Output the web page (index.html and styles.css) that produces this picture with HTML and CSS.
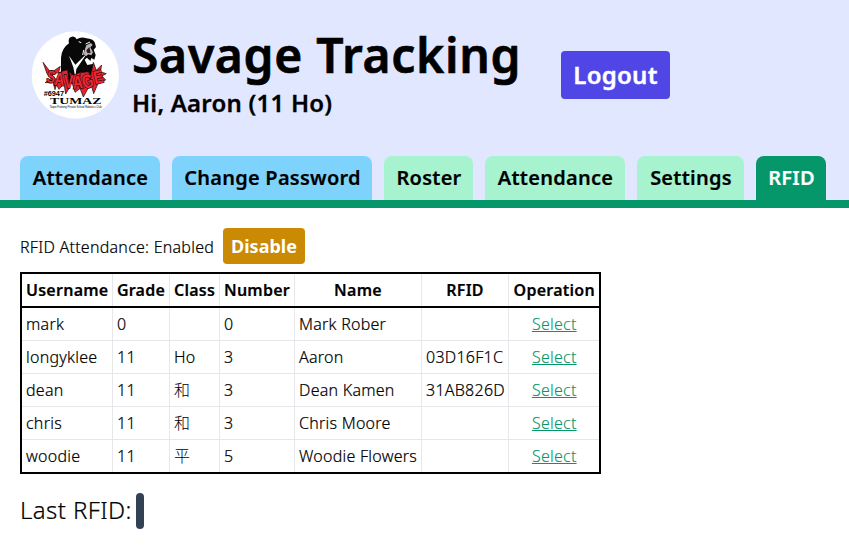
FILE: index.html
```html
<!DOCTYPE html>
<html lang="en">
<head>
<meta charset="utf-8">
<title>Savage Tracking</title>
<link rel="stylesheet" href="styles.css">
</head>
<body>
<header class="header">
  <div class="brand">
    <svg class="logo" viewBox="0 0 300 300" aria-label="Savage Tumaz #6947">
      <circle cx="151" cy="150" r="131" fill="#fff"/>
      <path d="M103 178L108 140L108 98Q110 70 132 55Q128 37 140 35Q151 33 155 43Q168 34 184 40Q204 42 209 52L213 66L206 74L212 90L208 104L199 99L196 108L186 98L179 104L187 120L207 116L203 130L190 176Z" fill="#080808"/>
      <path d="M132 92L151 119L187 84L154 132L151 157L145 127Z" fill="#fff"/>
      <path d="M180 72L184 61L198 54L203 60L196 67L204 82L199 91L190 88L184 93L176 88Z" fill="#b5b5b5"/>
      <path d="M184 76L193 66L197 84L187 84Z" fill="#341414"/>
      <path d="M182 57l13-6M161 50l8 3M176 75l-3 15" stroke="#fff" stroke-width="3"/>
      <g fill="#e32430" stroke="#180808" stroke-width="2">
        <path d="M54 112L78 143L106 124L101 142L81 150L98 168L90 194L84 171L60 173L72 164L79 160L66 146Z"/>
        <path d="M107 140L128 134L134 187L122 207L117 176L102 193L95 181Z"/>
        <path d="M132 140L146 151L170 140L173 185L150 202L143 179Z"/>
        <path d="M166 143L191 140L200 170L193 183L175 216L162 182Z"/>
        <path d="M205 112L214 136L230 120L226 140L244 146L231 153L242 165L218 178L206 206L195 167Z"/>
      </g>
      <g class="wordmark">
        <text transform="translate(63 171) rotate(9) scale(.72 1)" font-size="52">S</text>
        <text transform="translate(87 180) rotate(5) scale(.75 1)" font-size="55">A</text>
        <text transform="translate(117 190) scale(.75 1)" font-size="56">V</text>
        <text transform="translate(144 191) rotate(-3) scale(.77 1)" font-size="55">A</text>
        <text transform="translate(176 192) rotate(-14) scale(.74 1)" font-size="58">G</text>
        <text transform="translate(210 178) rotate(-13) scale(.78 1)" font-size="55">E</text>
      </g>
      <text class="number" x="56" y="212" textLength="61" lengthAdjust="spacingAndGlyphs">#6947</text>
      <text class="tumaz" x="75" y="236" textLength="154" lengthAdjust="spacingAndGlyphs">TUMAZ</text>
      <text class="club" x="74" y="249" textLength="156" lengthAdjust="spacingAndGlyphs">Taipei Fuhsing Private School Robotics Club</text>
    </svg>
    <div class="titles">
      <h1>Savage Tracking</h1>
      <h2>Hi, Aaron (11 Ho)</h2>
    </div>
    <button class="logout">Logout</button>
  </div>
  <nav class="tabs">
    <a class="tab w-attendance">Attendance</a>
    <a class="tab w-password">Change Password</a>
    <a class="tab admin w-roster">Roster</a>
    <a class="tab admin w-attendance">Attendance</a>
    <a class="tab admin w-settings">Settings</a>
    <a class="tab active w-rfid">RFID</a>
  </nav>
</header>
<main>
  <div class="status"><span>RFID Attendance: Enabled</span><button class="disable">Disable</button></div>
  <table>
    <colgroup><col class="c1"><col class="c2"><col class="c3"><col class="c4"><col class="c5"><col class="c6"><col class="c7"></colgroup>
    <thead><tr><th>Username</th><th>Grade</th><th>Class</th><th>Number</th><th>Name</th><th>RFID</th><th>Operation</th></tr></thead>
    <tbody>
      <tr><td>mark</td><td>0</td><td></td><td>0</td><td>Mark Rober</td><td></td><td class="op"><a>Select</a></td></tr>
      <tr><td>longyklee</td><td>11</td><td>Ho</td><td>3</td><td>Aaron</td><td>03D16F1C</td><td class="op"><a>Select</a></td></tr>
      <tr><td>dean</td><td>11</td><td class="cjk">和</td><td>3</td><td>Dean Kamen</td><td>31AB826D</td><td class="op"><a>Select</a></td></tr>
      <tr><td>chris</td><td>11</td><td class="cjk">和</td><td>3</td><td>Chris Moore</td><td></td><td class="op"><a>Select</a></td></tr>
      <tr><td>woodie</td><td>11</td><td class="cjk">平</td><td>5</td><td>Woodie Flowers</td><td></td><td class="op"><a>Select</a></td></tr>
    </tbody>
  </table>
  <div class="last"><span>Last RFID:</span><span class="chip"></span></div>
</main>
</body>
</html>
```
FILE: styles.css
```css
* { box-sizing: border-box; }
body { margin: 0; background: #fff; color: #000; font: 300 16px/24px "Noto Sans", "Noto Sans CJK TC", sans-serif; letter-spacing: .25px; -webkit-text-stroke: .2px; overflow: hidden; }
h1, h2 { margin: 0; font-weight: 600; white-space: nowrap; }
.header { display: flex; flex-direction: column; justify-content: space-between; height: 208px; background: #e0e7ff; border-bottom: 8px solid #059669; }
.brand { display: flex; padding: 25px 0 0 25px; }
.logo { width: 100px; height: 100px; flex: none; letter-spacing: 0; -webkit-text-stroke: 0; }
.titles { width: 429px; padding: 6px 0 0 7px; }
h1 { font-size: 48px; line-height: 48px; letter-spacing: .7px; -webkit-text-stroke: .7px; }
h2 { font-size: 24px; line-height: 32px; margin-top: 8px; letter-spacing: .22px; -webkit-text-stroke: .3px; }
button { border: 0; border-radius: 4px; padding: 0; color: #fff; font-family: inherit; font-weight: 700; letter-spacing: 0; -webkit-text-stroke: 0; }
.logout { margin: 26px 0 0 7px; width: 109px; height: 48px; background: #4f46e5; font-size: 24px; line-height: 32px; font-weight: 600; letter-spacing: .26px; -webkit-text-stroke: .4px; }
.tabs { display: flex; gap: 12px; padding-left: 20px; }
.tab { flex: none; height: 44px; padding: 8px 0 8px 1px; border-radius: 8px 8px 0 0; background: #7dd3fc; font-size: 20px; line-height: 28px; font-weight: 600; text-align: center; white-space: nowrap; -webkit-text-stroke: .2px; }
.tab.admin { background: #a7f3d0; }
.tab.active { background: #059669; color: #fff; }
.w-attendance { width: 140px; }
.w-password { width: 200px; }
.w-roster { width: 89px; }
.w-settings { width: 107px; }
.w-rfid { width: 70px; }
main { padding: 20px; }
.status { display: flex; align-items: center; height: 36px; gap: 8px; }
.status span { width: 195px; padding-top: 2px; white-space: nowrap; }
.disable { width: 82px; height: 36px; background: #ca8a04; font-size: 18px; line-height: 28px; }
table { width: 580px; margin-top: 8px; table-layout: fixed; border-collapse: collapse; border: 2px solid #000; }
th, td { height: 33px; padding: 4px; border: 1px solid #e5e7eb; text-align: left; white-space: nowrap; line-height: 24px; }
td + td { padding-left: 4.5px; }
th { padding: 4px 0 4px 1px; font-weight: 600; text-align: center; }
thead { border-bottom: 2px solid #000; }
thead tr { height: 34px; }
td.op { padding: 4px 4px 4px 5px; text-align: center; }
.op a { color: #059669; text-decoration: underline; -webkit-text-stroke: .1px; }
.cjk { -webkit-text-stroke: 0; }
.c1 { width: 91px; }
.c2 { width: 57px; }
.c3 { width: 50px; }
.c4 { width: 75px; }
.c5 { width: 127px; }
.c6 { width: 87px; }
.c7 { width: 92px; }
.last { display: flex; align-items: center; gap: 4px; margin-top: 19px; font-size: 24px; line-height: 32px; letter-spacing: .4px; }
.last span:first-child { width: 112px; margin-top: -2px; white-space: nowrap; }
.chip { width: 8px; height: 36px; border-radius: 4px; background: #334155; }
.wordmark { font-family: "Liberation Sans", sans-serif; font-weight: 700; fill: #ee2733; stroke: #180808; stroke-width: 4px; -webkit-text-stroke: 4px #180808; paint-order: stroke; }
.number { font: 700 19px "Liberation Sans", sans-serif; }
.tumaz { font: 700 24px "Liberation Serif", serif; }
.club { font: 400 8px "Liberation Sans", sans-serif; }
```
